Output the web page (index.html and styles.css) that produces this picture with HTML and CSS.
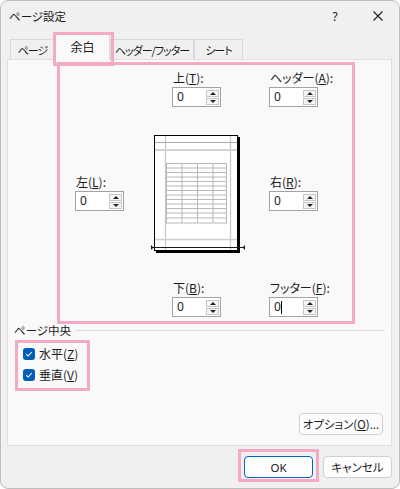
FILE: index.html
```html
<!DOCTYPE html>
<html lang="ja">
<head>
<meta charset="utf-8">
<title>ページ設定</title>
<link rel="stylesheet" href="styles.css">
</head>
<body>
<div class="dialog">
  <div class="titlebar">
    <span class="title">ページ設定</span>
    <span class="help">?</span>
    <span class="close"><svg width="10" height="10" viewBox="0 0 10 10"><path d="M0.5 0.5L9.5 9.5M9.5 0.5L0.5 9.5" stroke="#1b1b1b" stroke-width="1.1" fill="none"/></svg></span>
  </div>
  <div class="tabs">
    <div class="tab">ページ</div>
    <div class="tab active">余白</div>
    <div class="tab">ヘッダー/フッター</div>
    <div class="tab">シート</div>
  </div>
  <div class="panel">
    <div class="margins">
      <div class="field f-top">
        <label>上(<u>T</u>):</label>
        <div class="spin"><span class="val">0</span><span class="arrows"><span class="up"></span><span class="down"></span></span></div>
      </div>
      <div class="field f-header">
        <label>ヘッダー(<u>A</u>):</label>
        <div class="spin"><span class="val">0</span><span class="arrows"><span class="up"></span><span class="down"></span></span></div>
      </div>
      <div class="field f-left">
        <label>左(<u>L</u>):</label>
        <div class="spin"><span class="val">0</span><span class="arrows"><span class="up"></span><span class="down"></span></span></div>
      </div>
      <svg class="preview" width="96" height="122" viewBox="0 0 96 122">
        <rect x="6" y="3" width="84" height="116" fill="#000"/>
        <rect x="4.5" y="1.5" width="83" height="115" fill="#fff" stroke="#000" stroke-width="1"/>
        <line x1="15.5" y1="2" x2="15.5" y2="116" stroke="#c9c9c9" stroke-width="1.3"/>
        <line x1="80.5" y1="2" x2="80.5" y2="116" stroke="#c9c9c9" stroke-width="1.3"/>
        <line x1="5" y1="8.5" x2="87" y2="8.5" stroke="#a9a9a9" stroke-width="1"/>
        <line x1="5" y1="16" x2="87" y2="16" stroke="#d3d3d3" stroke-width="2"/>
        <line x1="5" y1="105.5" x2="87" y2="105.5" stroke="#d0d0d0" stroke-width="1.4"/>
        <g stroke="#b8b8b8" stroke-width="1" fill="none">
          <rect x="16.5" y="29.5" width="60" height="59.5"/>
          <line x1="32" y1="29.5" x2="32" y2="89"/>
          <line x1="47.5" y1="29.5" x2="47.5" y2="89"/>
          <line x1="63" y1="29.5" x2="63" y2="89"/>
          <line x1="16.5" y1="34" x2="76.5" y2="34"/>
          <line x1="16.5" y1="38.5" x2="76.5" y2="38.5"/>
          <line x1="16.5" y1="43" x2="76.5" y2="43"/>
          <line x1="16.5" y1="47.5" x2="76.5" y2="47.5"/>
          <line x1="16.5" y1="52" x2="76.5" y2="52"/>
          <line x1="16.5" y1="56.5" x2="76.5" y2="56.5"/>
          <line x1="16.5" y1="61" x2="76.5" y2="61"/>
          <line x1="16.5" y1="65.5" x2="76.5" y2="65.5"/>
          <line x1="16.5" y1="70" x2="76.5" y2="70"/>
          <line x1="16.5" y1="74.5" x2="76.5" y2="74.5"/>
          <line x1="16.5" y1="79" x2="76.5" y2="79"/>
          <line x1="16.5" y1="84" x2="76.5" y2="84"/>
        </g>
        <line x1="2" y1="113.5" x2="94" y2="113.5" stroke="#1a1a1a" stroke-width="1"/>
        <path d="M1 111L3.5 113.5L1 116Z" fill="#1a1a1a"/>
        <path d="M95 111L92.5 113.5L95 116Z" fill="#1a1a1a"/>
      </svg>
      <div class="field f-right">
        <label>右(<u>R</u>):</label>
        <div class="spin"><span class="val">0</span><span class="arrows"><span class="up"></span><span class="down"></span></span></div>
      </div>
      <div class="field f-bottom">
        <label>下(<u>B</u>):</label>
        <div class="spin"><span class="val">0</span><span class="arrows"><span class="up"></span><span class="down"></span></span></div>
      </div>
      <div class="field f-footer">
        <label>フッター(<u>F</u>):</label>
        <div class="spin"><span class="val">0<span class="caret"></span></span><span class="arrows"><span class="up"></span><span class="down"></span></span></div>
      </div>
    </div>
    <div class="group-title"><span>ページ中央</span><span class="rule"></span></div>
    <div class="checks">
      <div class="check"><span class="box"><svg width="8" height="8" viewBox="0 0 8 8"><path d="M1.2 4.2L3.1 6L6.8 2" stroke="#fff" stroke-width="1.1" fill="none"/></svg></span><span>水平(<u>Z</u>)</span></div>
      <div class="check"><span class="box"><svg width="8" height="8" viewBox="0 0 8 8"><path d="M1.2 4.2L3.1 6L6.8 2" stroke="#fff" stroke-width="1.1" fill="none"/></svg></span><span>垂直(<u>V</u>)</span></div>
    </div>
    <div class="options-row"><button class="btn btn-options">オプション(<u>O</u>)...</button></div>
  </div>
  <div class="footer">
    <button class="btn btn-ok">OK</button>
    <button class="btn">キャンセル</button>
  </div>
</div>
</body>
</html>
```

FILE: styles.css
```css
body {
  margin: 0;
  font-family: "Noto Sans CJK JP", "Noto Sans", sans-serif;
  font-size: 12px;
  color: #1b1b1b;
  font-feature-settings: "palt";
}

u {
  text-decoration: underline;
  text-underline-offset: 1px;
}

.dialog {
  width: 400px;
  height: 489px;
  box-sizing: border-box;
  border: 1px solid #bdbdbd;
  border-radius: 8px;
  background: #f0f0f0;
  overflow: hidden;
}

.titlebar {
  display: flex;
  align-items: center;
  height: 30px;
}

.title {
  padding-left: 8px;
  font-size: 11.5px;
}

.help {
  margin-left: auto;
  width: 20px;
  text-align: center;
  font-size: 12px;
  font-family: "Noto Sans", sans-serif;
}

.close {
  display: flex;
  margin-left: 28px;
  margin-right: 16px;
}

.tabs {
  display: grid;
  grid-template-columns: 45px 55px 84px 49px;
  align-items: end;
  height: 28px;
  margin-left: 9px;
}

.tab {
  position: relative;
  height: 20px;
  box-sizing: border-box;
  border: 1px solid #dadada;
  border-bottom: none;
  background: #f0f0f0;
  display: flex;
  align-items: center;
  justify-content: center;
  font-size: 11px;
  white-space: nowrap;
  letter-spacing: -1px;
}

.tab.active {
  height: 27px;
  margin-bottom: -1px;
  background: #f9f9f9;
  z-index: 2;
  padding-bottom: 2px;
  font-size: 12px;
  letter-spacing: 0;
}

.tab.active::after {
  content: "";
  position: absolute;
  left: -3px;
  right: -5px;
  top: -2px;
  bottom: -6px;
  border: 3px solid #f4a9c6;
}

.panel {
  position: relative;
  margin-left: 6px;
  width: 385px;
  height: 387px;
  box-sizing: border-box;
  border: 1px solid #e0e0e0;
  background: #f9f9f9;
}

.margins {
  margin: 2px 0 0 49px;
  width: 298px;
  height: 262px;
  box-sizing: border-box;
  border: 3px solid #f4a9c6;
  padding: 5px 0 0 15px;
  display: grid;
  grid-template-columns: 49px 26px 96px 22px 49px;
  grid-template-rows: 37px 27px 122px 24px 37px;
}

.field {
  display: flex;
  flex-direction: column;
  gap: 2px;
}

.field label {
  line-height: 15px;
  padding-left: 1px;
  white-space: nowrap;
}

.f-top { grid-column: 3; grid-row: 1; margin-left: 22px; }
.f-header { grid-column: 5; grid-row: 1; margin-left: 1px; }
.f-left { grid-column: 1; grid-row: 3; margin-top: 40px; }
.preview { grid-column: 3; grid-row: 3; display: block; }
.f-right { grid-column: 5; grid-row: 3; margin-top: 40px; margin-left: 1px; }
.f-bottom { grid-column: 3; grid-row: 5; margin-left: 22px; }
.f-footer { grid-column: 5; grid-row: 5; margin-left: 1px; }

.spin {
  display: flex;
  width: 49px;
  height: 20px;
  box-sizing: border-box;
  border: 1px solid #a3a3a3;
  background: #fff;
}

.val {
  flex: 1;
  padding-left: 4px;
  line-height: 18px;
  font-family: "Noto Sans", sans-serif;
  font-size: 12px;
  display: flex;
  align-items: center;
}

.caret {
  display: inline-block;
  width: 1px;
  height: 13px;
  background: #000;
}

.arrows {
  display: flex;
  flex-direction: column;
  gap: 1px;
  width: 13px;
  padding: 2px 1px 1px 0;
}

.up, .down {
  flex: 1;
  border: 1px solid #c6c6c6;
  background: #f6f6f6;
  display: flex;
  align-items: center;
  justify-content: center;
}

.up::before {
  content: "";
  border-left: 3px solid transparent;
  border-right: 3px solid transparent;
  border-bottom: 3px solid #222;
}

.down::before {
  content: "";
  border-left: 3px solid transparent;
  border-right: 3px solid transparent;
  border-top: 3px solid #222;
}

.group-title {
  display: flex;
  align-items: center;
  margin: 0 6px 0 6px;
  line-height: 12px;
  font-size: 11.5px;
}

.rule {
  flex: 1;
  height: 1px;
  background: #dcdcdc;
  margin-left: 4px;
}

.checks {
  margin: 4px 0 0 7px;
  width: 75px;
  height: 51px;
  box-sizing: border-box;
  border: 3px solid #f4a9c6;
  padding: 5px 0 0 5px;
  display: flex;
  flex-direction: column;
  gap: 9px;
}

.check {
  display: flex;
  align-items: center;
  gap: 4px;
  line-height: 12px;
  white-space: nowrap;
}

.box {
  width: 12px;
  height: 12px;
  border-radius: 3px;
  background: #005fb8;
  display: flex;
  align-items: center;
  justify-content: center;
}

.options-row {
  display: flex;
  justify-content: flex-end;
  margin: 22px 8px 0 0;
}

.btn {
  height: 22px;
  width: 69px;
  box-sizing: border-box;
  border: 1px solid #d0d0d0;
  border-radius: 4px;
  background: #fdfdfd;
  font-family: "Noto Sans CJK JP", "Noto Sans", sans-serif;
  font-feature-settings: "palt";
  font-size: 11.5px;
  color: #1b1b1b;
  padding: 0;
  white-space: nowrap;
}

.btn-options {
  width: 84px;
}

.footer {
  display: flex;
  justify-content: flex-end;
  gap: 10px;
  margin-top: 10px;
  padding-right: 7px;
}

.btn-ok {
  position: relative;
  border-color: #0067c0;
  font-family: "Noto Sans", sans-serif;
}

.btn-ok::after {
  content: "";
  position: absolute;
  left: -7px;
  right: -7px;
  top: -8px;
  bottom: -5px;
  border: 3px solid #f4a9c6;
}
```
